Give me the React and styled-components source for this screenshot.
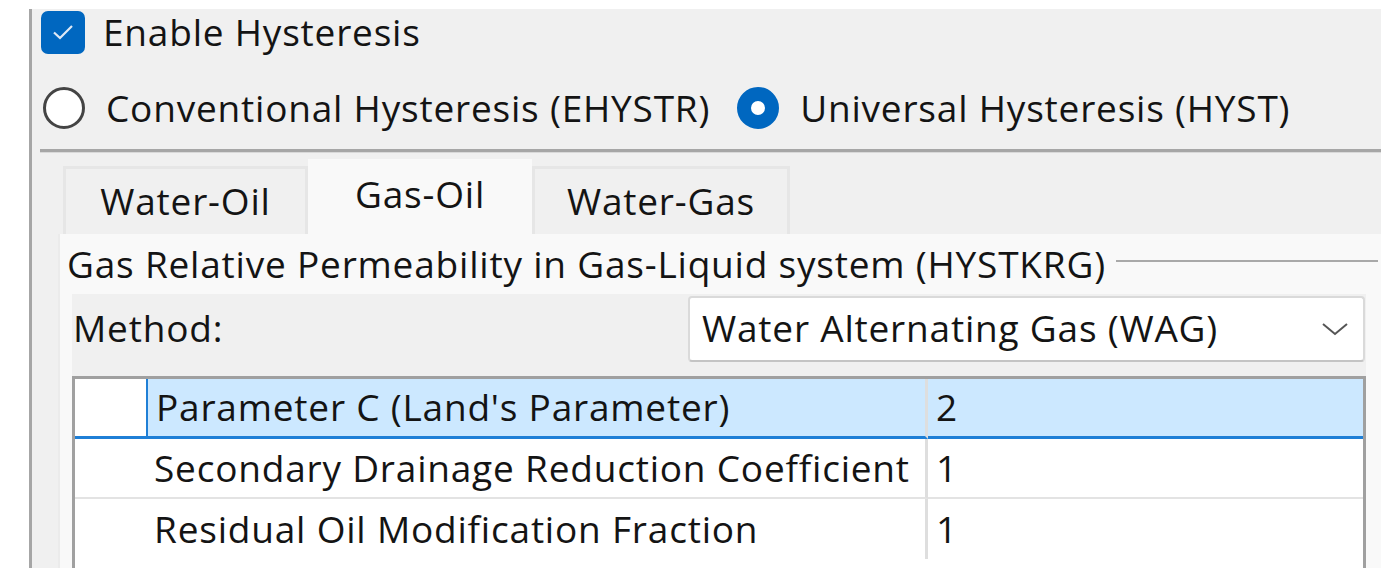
import React from 'react';
import styled, { createGlobalStyle } from 'styled-components';

const GlobalStyle = createGlobalStyle`
  html, body { margin: 0; padding: 0; background: #ffffff; }
  body {
    font-family: 'Open Sans', 'Noto Sans', sans-serif;
    color: #141414;
    overflow: hidden;
  }
`;

const accent = '#0067c0';

const Root = styled.div`
  padding: 9px 0 0 29px;
  width: 1396px;
  height: 568px;
  box-sizing: border-box;
`;

const Frame = styled.div`
  width: 1352px;
  height: 559px;
  box-sizing: border-box;
  border-left: 3px solid #a6a6a6;
  background: #f0f0f0;
  display: flex;
  flex-direction: column;
`;

const Label = styled.span`
  font-size: 37px;
  letter-spacing: 0.8px;
  white-space: nowrap;
  line-height: 1.15;
`;

const CheckRow = styled.div`
  display: flex;
  align-items: center;
  min-height: 44px;
  margin-top: 1px;
  padding-left: 9px;
  gap: 18px;
`;

const CheckBox = styled.span`
  width: 44px;
  height: 43px;
  flex: none;
  border-radius: 7px;
  background: ${accent};
  display: flex;
  align-items: center;
  justify-content: center;
`;

const RadioRow = styled.div`
  display: flex;
  align-items: center;
  height: 46px;
  margin-top: 31px;
  padding-left: 11px;
`;

const RadioItem = styled.label`
  display: flex;
  align-items: center;
  gap: 21px;
  margin-right: 27px;
`;

const Radio = styled.span`
  width: 42px;
  height: 42px;
  flex: none;
  border-radius: 50%;
  box-sizing: border-box;
  border: ${p => (p.checked ? `14px solid ${accent}` : '3px solid #444')};
  background: #fff;
`;

const Separator = styled.div`
  margin: 18px 0 0 8px;
  height: 3px;
  background: #a6a6a6;
  border-bottom: 1px solid #d9d9d9;
`;

const TabStrip = styled.div`
  display: flex;
  align-items: flex-end;
  margin-top: 6px;
  padding-left: 31px;
  height: 75px;
`;

const Tab = styled.div`
  width: ${p => p.w}px;
  height: ${p => (p.active ? 75 : 68)}px;
  box-sizing: border-box;
  display: flex;
  align-items: center;
  justify-content: center;
  background: ${p => (p.active ? '#f9f9f9' : '#f0f0f0')};
  border: 3px solid ${p => (p.active ? '#f9f9f9' : '#e6e6e6')};
  border-bottom: none;
  padding-bottom: ${p => (p.active ? 8 : 0)}px;
`;

const TabPanel = styled.div`
  flex: 1;
  margin-left: 26px;
  background: #f9f9f9;
  border-left: 2px solid #ebebeb;
  display: flex;
  flex-direction: column;
`;

const GroupTitle = styled.div`
  display: flex;
  align-items: center;
  height: 60px;
  padding-left: 7px;
  gap: 10px;
`;

const TitleRule = styled.div`
  flex: 1;
  height: 2px;
  background: #a9a9a9;
  margin-right: 3px;
  margin-top: -6px;
`;

const GroupBody = styled.div`
  flex: 1;
  margin-left: 12px;
  width: 1294px;
  background: #f0f0f0;
  display: flex;
  flex-direction: column;
`;

const MethodRow = styled.div`
  display: flex;
  align-items: center;
  justify-content: space-between;
  height: 77px;
  padding: 0 1px 8px 1px;
  box-sizing: border-box;
`;

const Combo = styled.div`
  width: 677px;
  height: 66px;
  box-sizing: border-box;
  background: #ffffff;
  border: 2px solid #dadada;
  border-bottom-color: #c4c4c4;
  border-radius: 4px;
  display: flex;
  align-items: center;
  justify-content: space-between;
  padding: 0 14px 0 12px;
`;

const Grid = styled.div`
  flex: 1;
  margin-top: 5px;
  background: #ffffff;
  border: 3px solid #a0a0a0;
  border-bottom: none;
  display: grid;
  grid-template-columns: 71px 782px 1fr;
  grid-auto-rows: 60px;
`;

const Cell = styled.div`
  display: flex;
  align-items: center;
  box-sizing: border-box;
  padding-left: ${p => (p.head ? 0 : 8)}px;
  background: ${p => (p.selected && !p.head ? '#cce8ff' : '#ffffff')};
  border-bottom: ${p => (p.selected ? '3px solid #1f7fd6' : p.last ? 'none' : '2px solid #e3e3e3')};
  border-right: ${p => (p.divider ? '3px solid #dedede' : 'none')};
  border-left: ${p => (p.selected && p.first ? '2px solid #1f7fd6' : 'none')};
`;

const rows = [
  ['Parameter C (Land\'s Parameter)', '2'],
  ['Secondary Drainage Reduction Coefficient', '1'],
  ['Residual Oil Modification Fraction', '1'],
];

const App = () => (
  <>
    <GlobalStyle />
    <Root>
      <Frame>
        <CheckRow>
          <CheckBox>
            <svg width="24" height="18" viewBox="0 0 24 18">
              <path d="M3 9.5 L9 15 L21 3" fill="none" stroke="#dfe9f5" strokeWidth="2.2" />
            </svg>
          </CheckBox>
          <Label>Enable Hysteresis</Label>
        </CheckRow>

        <RadioRow>
          <RadioItem>
            <Radio />
            <Label>Conventional Hysteresis (EHYSTR)</Label>
          </RadioItem>
          <RadioItem>
            <Radio checked />
            <Label>Universal Hysteresis (HYST)</Label>
          </RadioItem>
        </RadioRow>

        <Separator />

        <TabStrip>
          <Tab w={245}><Label>Water-Oil</Label></Tab>
          <Tab w={224} active><Label>Gas-Oil</Label></Tab>
          <Tab w={258}><Label>Water-Gas</Label></Tab>
        </TabStrip>

        <TabPanel>
          <GroupTitle>
            <Label>Gas Relative Permeability in Gas-Liquid system (HYSTKRG)</Label>
            <TitleRule />
          </GroupTitle>
          <GroupBody>
            <MethodRow>
              <Label>Method:</Label>
              <Combo>
                <Label>Water Alternating Gas (WAG)</Label>
                <svg width="28" height="16" viewBox="0 0 28 16">
                  <path d="M2 3 L14 13 L26 3" fill="none" stroke="#555" strokeWidth="2" />
                </svg>
              </Combo>
            </MethodRow>
            <Grid>
              {rows.map(([name, value], i) => (
                <React.Fragment key={name}>
                  <Cell head selected={i === 0} last={i === rows.length - 1} />
                  <Cell first divider selected={i === 0} last={i === rows.length - 1}><Label>{name}</Label></Cell>
                  <Cell selected={i === 0} last={i === rows.length - 1}><Label>{value}</Label></Cell>
                </React.Fragment>
              ))}
            </Grid>
          </GroupBody>
        </TabPanel>
      </Frame>
    </Root>
  </>
);

export default App;
